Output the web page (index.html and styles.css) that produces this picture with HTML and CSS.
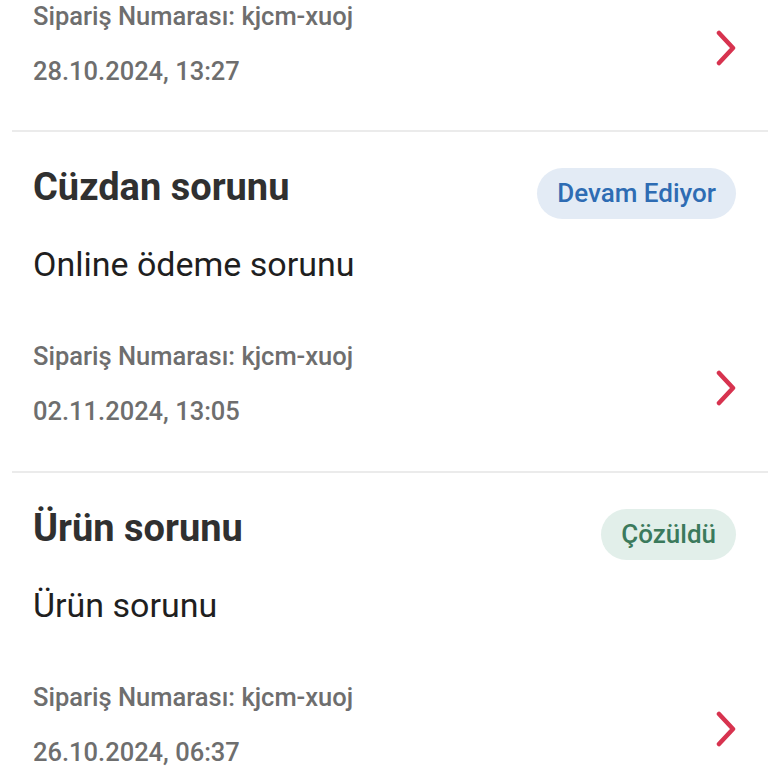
FILE: index.html
```html
<!DOCTYPE html>
<html lang="tr">
<head>
    <meta charset="UTF-8">
    <meta name="viewport" content="width=device-width, initial-scale=1.0">
    <title>Destek Taleplerim</title>
    <link rel="stylesheet" href="styles.css">
</head>
<body>

<main class="ticket-list">
    <!-- first item is scrolled partly out of view -->
    <article class="ticket ticket-partial">
        <div class="ticket-footer">
            <div class="ticket-meta">
                <p>Sipariş Numarası: kjcm-xuoj</p>
                <p>28.10.2024, 13:27</p>
            </div>
            <svg class="chevron" viewBox="0 0 20 36" aria-hidden="true">
                <path d="M3 3 L17 18 L3 33"/>
            </svg>
        </div>
    </article>

    <article class="ticket">
        <div class="ticket-head">
            <h2>Cüzdan sorunu</h2>
            <span class="badge badge-progress">Devam Ediyor</span>
        </div>
        <p class="ticket-topic">Online ödeme sorunu</p>
        <div class="ticket-footer">
            <div class="ticket-meta">
                <p>Sipariş Numarası: kjcm-xuoj</p>
                <p>02.11.2024, 13:05</p>
            </div>
            <svg class="chevron" viewBox="0 0 20 36" aria-hidden="true">
                <path d="M3 3 L17 18 L3 33"/>
            </svg>
        </div>
    </article>

    <article class="ticket">
        <div class="ticket-head">
            <h2>Ürün sorunu</h2>
            <span class="badge badge-done">Çözüldü</span>
        </div>
        <p class="ticket-topic">Ürün sorunu</p>
        <div class="ticket-footer">
            <div class="ticket-meta">
                <p>Sipariş Numarası: kjcm-xuoj</p>
                <p>26.10.2024, 06:37</p>
            </div>
            <svg class="chevron" viewBox="0 0 20 36" aria-hidden="true">
                <path d="M3 3 L17 18 L3 33"/>
            </svg>
        </div>
    </article>
</main>

</body>
</html>
```

FILE: styles.css
```css
body {
    font-family: Roboto, "Noto Sans", sans-serif;
    margin: 0;
    padding: 0;
    background-color: #ffffff;
    color: #2b2b2b;
    overflow: hidden;
}

.ticket-list {
    margin-top: -1px;
}

.ticket {
    margin-left: 12px;
    padding: 33px 32px 43px 21px;
    border-bottom: 2px solid #ebebeb;
}

.ticket-partial {
    padding-top: 0;
    padding-bottom: 42px;
}

.ticket-head {
    display: flex;
    align-items: flex-start;
    justify-content: space-between;
}

.ticket-head h2 {
    margin: 0;
    font-size: 38px;
    line-height: 44px;
    font-weight: 700;
    color: #303030;
}

.badge {
    margin-top: 3px;
    padding: 0 20px;
    height: 51px;
    line-height: 51px;
    border-radius: 26px;
    font-size: 26px;
    font-weight: 500;
}

.badge-progress {
    background-color: #e3ebf5;
    color: #2e6cb3;
}

.badge-done {
    background-color: #e2efea;
    color: #3b7a5c;
}

.ticket-topic {
    margin: 25px 0 0;
    font-size: 34px;
    line-height: 40px;
    color: #1f1f1f;
}

.ticket-footer {
    display: flex;
    align-items: center;
    justify-content: space-between;
    margin-top: 55px;
}

.ticket-partial .ticket-footer {
    margin-top: 0;
}

.ticket-meta p {
    margin: 0;
    font-size: 25.5px;
    line-height: 34px;
    font-weight: 500;
    color: #6e6e6e;
}

.ticket-meta p + p {
    margin-top: 21px;
}

.chevron {
    width: 20px;
    height: 36px;
    margin-top: 8px;
}

.chevron path {
    fill: none;
    stroke: #d7334f;
    stroke-width: 4.5;
    stroke-linecap: round;
    stroke-linejoin: round;
}
```
